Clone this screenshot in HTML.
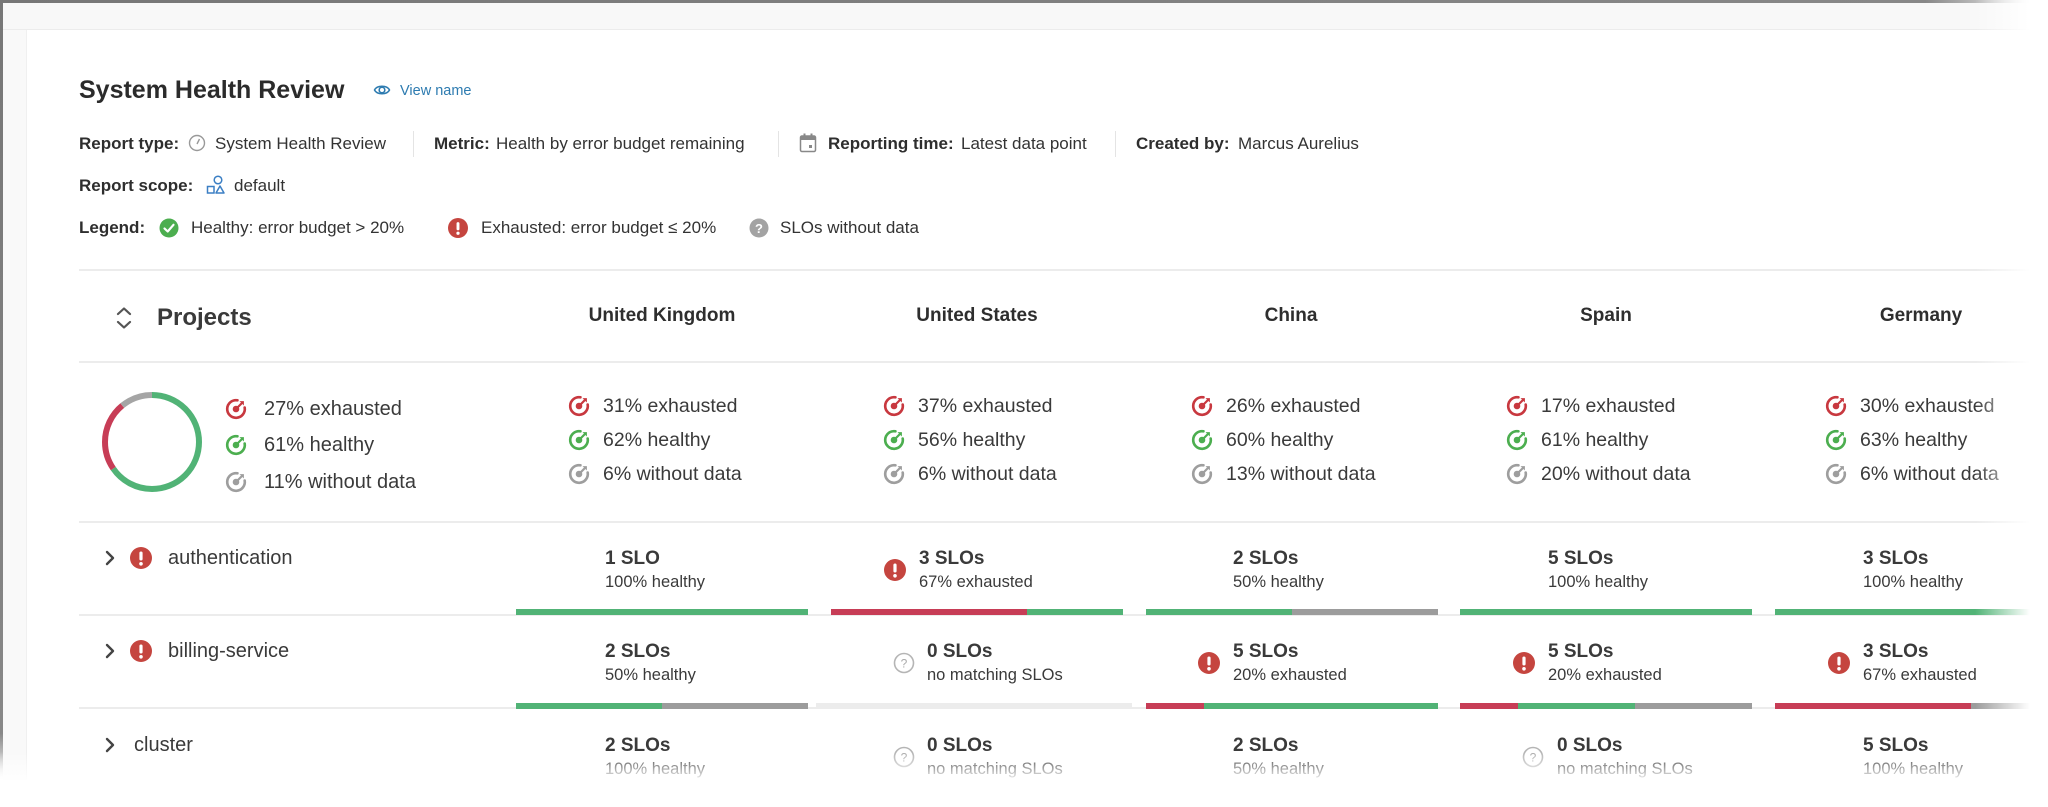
<!DOCTYPE html>
<html><head><meta charset="utf-8"><style>
*{margin:0;padding:0;box-sizing:border-box}
body{width:2048px;height:807px;overflow:hidden;background:#fff;font-family:"Liberation Sans",sans-serif;color:#333;position:relative}
.a{position:absolute;white-space:nowrap}
.b{font-weight:bold;color:#2e2e2e}
.t{font-size:17px;line-height:20px}
.sm{font-size:20px;line-height:24px;color:#3a3a3a}
.cs{font-size:19.5px;line-height:24px;color:#3a3a3a}
.h{font-size:19px;line-height:24px;font-weight:bold;color:#2e2e2e}
.st{font-size:19px;line-height:22px;font-weight:bold;color:#3a3a3a}
.sb{font-size:16.5px;line-height:20px;color:#3a3a3a}
.line{position:absolute;left:79px;width:1960px;height:2px;background:#ececec}
.bar{position:absolute;height:6px;display:flex;width:292px}
.g{background:#51b376}.r{background:#c73d56}.y{background:#9c9c9c}.l{background:#ececec}
.vd{position:absolute;width:1px;height:26px;background:#e4e4e4;top:131px}
</style></head><body>
<svg width="0" height="0" style="position:absolute">
<defs>
<symbol id="tg" viewBox="0 0 20 20"><path d="M11.3 2.1A8 8 0 1 0 17.9 8.7" fill="none" stroke="currentColor" stroke-width="2.4" stroke-linecap="round"/><circle cx="10" cy="10" r="3" fill="currentColor"/><path d="M10 10L16 4" stroke="currentColor" stroke-width="2"/><path d="M13.2 2.8L17.2 2.8L17.2 6.8Z" fill="currentColor"/></symbol>
<symbol id="ex" viewBox="0 0 22 22"><circle cx="11" cy="11" r="11" fill="#c5453f"/><rect x="9.4" y="4.5" width="3.2" height="9" rx="1.6" fill="#fff"/><circle cx="11" cy="16.8" r="1.8" fill="#fff"/></symbol>
<symbol id="q" viewBox="0 0 22 22"><circle cx="11" cy="11" r="9.5" fill="none" stroke="#b5b5b5" stroke-width="1.6"/><text x="11" y="15.5" font-size="12" text-anchor="middle" fill="#aaa" font-family="Liberation Sans">?</text></symbol>
<symbol id="chev" viewBox="0 0 12 16"><path d="M3 2L9 8L3 14" fill="none" stroke="#444" stroke-width="2.4" stroke-linecap="round" stroke-linejoin="round"/></symbol>
</defs></svg>

<div class="a" style="left:0;top:0;width:2048px;height:3px;background:linear-gradient(90deg,#777 0,#888 94%,rgba(255,255,255,0) 100%)"></div>
<div class="a" style="left:0;top:0;width:3px;height:780px;background:linear-gradient(#777 0,#888 94%,rgba(255,255,255,0))"></div>
<div class="a" style="left:3px;top:3px;width:2045px;height:27px;background:#f8f8f8;border-bottom:1px solid #ececec"></div>
<div class="a" style="left:3px;top:30px;width:24px;height:750px;background:#f9f9f9;border-right:1px solid #f0f0f0"></div>

<div class="a b" style="left:79px;top:75px;font-size:25px;line-height:30px;color:#2b2b2b">System Health Review</div>
<svg class="a" style="left:373px;top:81px" width="18" height="18" viewBox="0 0 18 18"><path d="M1.5 9C4 4 14 4 16.5 9C14 14 4 14 1.5 9Z" fill="none" stroke="#2d7bb0" stroke-width="1.5"/><circle cx="9" cy="9" r="2.8" fill="none" stroke="#2d7bb0" stroke-width="1.6"/></svg>
<div class="a" style="left:400px;top:82px;font-size:14.5px;line-height:18px;color:#2d7bb0">View name</div>

<div class="a t b" style="left:79px;top:134px">Report type:</div>
<svg class="a" style="left:188px;top:134px" width="18" height="18" viewBox="0 0 18 18"><circle cx="9" cy="9" r="7.5" fill="none" stroke="#999" stroke-width="1.4"/><path d="M9 10L11.5 5" stroke="#999" stroke-width="1.4"/></svg>
<div class="a t" style="left:215px;top:134px">System Health Review</div>
<div class="vd" style="left:413px"></div>
<div class="a t b" style="left:434px;top:134px">Metric:</div>
<div class="a t" style="left:496px;top:134px">Health by error budget remaining</div>
<div class="vd" style="left:778px"></div>
<svg class="a" style="left:799px;top:133px" width="18" height="20" viewBox="0 0 18 20"><rect x="1.5" y="3" width="15" height="15.5" rx="1.5" fill="none" stroke="#888" stroke-width="1.5"/><rect x="1.5" y="3" width="15" height="4" fill="#888"/><rect x="4.5" y="0.5" width="2" height="4" fill="#888"/><rect x="11.5" y="0.5" width="2" height="4" fill="#888"/><rect x="10" y="12" width="3" height="3" fill="#888"/></svg>
<div class="a t b" style="left:828px;top:134px">Reporting time:</div>
<div class="a t" style="left:961px;top:134px">Latest data point</div>
<div class="vd" style="left:1115px"></div>
<div class="a t b" style="left:1136px;top:134px">Created by:</div>
<div class="a t" style="left:1238px;top:134px">Marcus Aurelius</div>

<div class="a t b" style="left:79px;top:176px">Report scope:</div>
<svg class="a" style="left:206px;top:175px" width="20" height="20" viewBox="0 0 20 20"><circle cx="12" cy="5" r="3.8" fill="none" stroke="#3b7fc4" stroke-width="1.5"/><rect x="1.5" y="11.5" width="6.5" height="6.5" fill="none" stroke="#3b7fc4" stroke-width="1.5"/><path d="M10 18L14 11L18 18Z" fill="none" stroke="#3b7fc4" stroke-width="1.5" stroke-linejoin="round"/></svg>
<div class="a t" style="left:234px;top:176px">default</div>

<div class="a t b" style="left:79px;top:218px">Legend:</div>
<svg class="a" style="left:159px;top:217px" width="20" height="22" viewBox="0 0 20 22"><circle cx="10" cy="11" r="9.5" fill="#4cae4f"/><path d="M5.5 11.5L8.7 14.5L14.5 7.8" fill="none" stroke="#fff" stroke-width="2.2" stroke-linecap="round" stroke-linejoin="round"/></svg>
<div class="a t" style="left:191px;top:218px">Healthy: error budget &gt; 20%</div>
<svg class="a" style="left:448px;top:217px" width="20" height="22"><use href="#ex"/></svg>
<div class="a t" style="left:481px;top:218px">Exhausted: error budget ≤ 20%</div>
<svg class="a" style="left:749px;top:217px" width="20" height="22" viewBox="0 0 20 22"><circle cx="10" cy="11" r="9.5" fill="#a3a3a3"/><text x="10" y="16" font-size="13" font-weight="bold" text-anchor="middle" fill="#fff" font-family="Liberation Sans">?</text></svg>
<div class="a t" style="left:780px;top:218px">SLOs without data</div>

<div class="line" style="top:269px"></div>

<svg class="a" style="left:114px;top:305px" width="20" height="26" viewBox="0 0 20 26"><path d="M4 9L10 3.5L16 9M4 17L10 22.5L16 17" fill="none" stroke="#555" stroke-width="2.2" stroke-linecap="round" stroke-linejoin="round"/></svg>
<div class="a b" style="left:157px;top:304px;font-size:24px;line-height:28px;color:#3a3a3a">Projects</div>
<div class="a h" style="left:516px;width:292px;text-align:center;top:304px">United Kingdom</div>
<div class="a h" style="left:831px;width:292px;text-align:center;top:304px">United States</div>
<div class="a h" style="left:1145px;width:292px;text-align:center;top:304px">China</div>
<div class="a h" style="left:1460px;width:292px;text-align:center;top:304px">Spain</div>
<div class="a h" style="left:1775px;width:292px;text-align:center;top:304px">Germany</div>

<div class="line" style="top:361px"></div>

<svg class="a" style="left:100px;top:390px" width="104" height="104" viewBox="0 0 104 104">
<g transform="rotate(-90 52 52)" fill="none" stroke-width="6">
<circle cx="52" cy="52" r="47" stroke="#51b376" stroke-dasharray="192.9 400"/>
<circle cx="52" cy="52" r="47" stroke="#c73d56" stroke-dasharray="0 192.9 69.8 400"/>
<circle cx="52" cy="52" r="47" stroke="#a5a5a5" stroke-dasharray="0 262.7 32.6 400"/>
</g></svg>
<svg class="a" style="left:225px;top:398px;color:#c8383f" width="22" height="22"><use href="#tg"/></svg>
<div class="a sm" style="left:264px;top:397px">27% exhausted</div>
<svg class="a" style="left:225px;top:434px;color:#4cae4f" width="22" height="22"><use href="#tg"/></svg>
<div class="a sm" style="left:264px;top:433px">61% healthy</div>
<svg class="a" style="left:225px;top:471px;color:#9e9e9e" width="22" height="22"><use href="#tg"/></svg>
<div class="a sm" style="left:264px;top:470px">11% without data</div>

<svg class="a" style="left:568px;top:395px;color:#c8383f" width="22" height="22"><use href="#tg"/></svg><div class="a cs" style="left:603px;top:394px">31% exhausted</div>
<svg class="a" style="left:568px;top:429px;color:#4cae4f" width="22" height="22"><use href="#tg"/></svg><div class="a cs" style="left:603px;top:428px">62% healthy</div>
<svg class="a" style="left:568px;top:463px;color:#9e9e9e" width="22" height="22"><use href="#tg"/></svg><div class="a cs" style="left:603px;top:462px">6% without data</div>

<svg class="a" style="left:883px;top:395px;color:#c8383f" width="22" height="22"><use href="#tg"/></svg><div class="a cs" style="left:918px;top:394px">37% exhausted</div>
<svg class="a" style="left:883px;top:429px;color:#4cae4f" width="22" height="22"><use href="#tg"/></svg><div class="a cs" style="left:918px;top:428px">56% healthy</div>
<svg class="a" style="left:883px;top:463px;color:#9e9e9e" width="22" height="22"><use href="#tg"/></svg><div class="a cs" style="left:918px;top:462px">6% without data</div>

<svg class="a" style="left:1191px;top:395px;color:#c8383f" width="22" height="22"><use href="#tg"/></svg><div class="a cs" style="left:1226px;top:394px">26% exhausted</div>
<svg class="a" style="left:1191px;top:429px;color:#4cae4f" width="22" height="22"><use href="#tg"/></svg><div class="a cs" style="left:1226px;top:428px">60% healthy</div>
<svg class="a" style="left:1191px;top:463px;color:#9e9e9e" width="22" height="22"><use href="#tg"/></svg><div class="a cs" style="left:1226px;top:462px">13% without data</div>

<svg class="a" style="left:1506px;top:395px;color:#c8383f" width="22" height="22"><use href="#tg"/></svg><div class="a cs" style="left:1541px;top:394px">17% exhausted</div>
<svg class="a" style="left:1506px;top:429px;color:#4cae4f" width="22" height="22"><use href="#tg"/></svg><div class="a cs" style="left:1541px;top:428px">61% healthy</div>
<svg class="a" style="left:1506px;top:463px;color:#9e9e9e" width="22" height="22"><use href="#tg"/></svg><div class="a cs" style="left:1541px;top:462px">20% without data</div>

<svg class="a" style="left:1825px;top:395px;color:#c8383f" width="22" height="22"><use href="#tg"/></svg><div class="a cs" style="left:1860px;top:394px">30% exhausted</div>
<svg class="a" style="left:1825px;top:429px;color:#4cae4f" width="22" height="22"><use href="#tg"/></svg><div class="a cs" style="left:1860px;top:428px">63% healthy</div>
<svg class="a" style="left:1825px;top:463px;color:#9e9e9e" width="22" height="22"><use href="#tg"/></svg><div class="a cs" style="left:1860px;top:462px">6% without data</div>

<div class="line" style="top:521px"></div>

<svg class="a" style="left:104px;top:550px" width="12" height="16"><use href="#chev"/></svg>
<svg class="a" style="left:130px;top:547px" width="22" height="22"><use href="#ex"/></svg>
<div class="a sm" style="left:168px;top:546px">authentication</div>
<div class="a st" style="left:605px;top:548px">1 SLO</div><div class="a sb" style="left:605px;top:572px">100% healthy</div>
<svg class="a" style="left:884px;top:559px" width="22" height="22"><use href="#ex"/></svg>
<div class="a st" style="left:919px;top:548px">3 SLOs</div><div class="a sb" style="left:919px;top:572px">67% exhausted</div>
<div class="a st" style="left:1233px;top:548px">2 SLOs</div><div class="a sb" style="left:1233px;top:572px">50% healthy</div>
<div class="a st" style="left:1548px;top:548px">5 SLOs</div><div class="a sb" style="left:1548px;top:572px">100% healthy</div>
<div class="a st" style="left:1863px;top:548px">3 SLOs</div><div class="a sb" style="left:1863px;top:572px">100% healthy</div>
<div class="line" style="top:614px"></div>
<div class="bar" style="left:516px;top:609px"><div class="g" style="flex:1"></div></div>
<div class="bar" style="left:831px;top:609px"><div class="r" style="flex:67"></div><div class="g" style="flex:33"></div></div>
<div class="bar" style="left:1146px;top:609px"><div class="g" style="flex:50"></div><div class="y" style="flex:50"></div></div>
<div class="bar" style="left:1460px;top:609px"><div class="g" style="flex:1"></div></div>
<div class="bar" style="left:1775px;top:609px"><div class="g" style="flex:1"></div></div>

<svg class="a" style="left:104px;top:643px" width="12" height="16"><use href="#chev"/></svg>
<svg class="a" style="left:130px;top:640px" width="22" height="22"><use href="#ex"/></svg>
<div class="a sm" style="left:168px;top:639px">billing-service</div>
<div class="a st" style="left:605px;top:641px">2 SLOs</div><div class="a sb" style="left:605px;top:665px">50% healthy</div>
<svg class="a" style="left:893px;top:652px" width="22" height="22"><use href="#q"/></svg>
<div class="a st" style="left:927px;top:641px">0 SLOs</div><div class="a sb" style="left:927px;top:665px">no matching SLOs</div>
<svg class="a" style="left:1198px;top:652px" width="22" height="22"><use href="#ex"/></svg>
<div class="a st" style="left:1233px;top:641px">5 SLOs</div><div class="a sb" style="left:1233px;top:665px">20% exhausted</div>
<svg class="a" style="left:1513px;top:652px" width="22" height="22"><use href="#ex"/></svg>
<div class="a st" style="left:1548px;top:641px">5 SLOs</div><div class="a sb" style="left:1548px;top:665px">20% exhausted</div>
<svg class="a" style="left:1828px;top:652px" width="22" height="22"><use href="#ex"/></svg>
<div class="a st" style="left:1863px;top:641px">3 SLOs</div><div class="a sb" style="left:1863px;top:665px">67% exhausted</div>
<div class="line" style="top:707px"></div>
<div class="bar" style="left:516px;top:703px"><div class="g" style="flex:50"></div><div class="y" style="flex:50"></div></div>
<div class="bar" style="left:816px;top:703px;width:316px"><div class="l" style="flex:1"></div></div>
<div class="bar" style="left:1146px;top:703px"><div class="r" style="flex:20"></div><div class="g" style="flex:80"></div></div>
<div class="bar" style="left:1460px;top:703px"><div class="r" style="flex:20"></div><div class="g" style="flex:40"></div><div class="y" style="flex:40"></div></div>
<div class="bar" style="left:1775px;top:703px"><div class="r" style="flex:67"></div><div class="y" style="flex:33"></div></div>

<svg class="a" style="left:104px;top:737px" width="12" height="16"><use href="#chev"/></svg>
<div class="a sm" style="left:134px;top:733px">cluster</div>
<div class="a st" style="left:605px;top:735px">2 SLOs</div><div class="a sb" style="left:605px;top:759px">100% healthy</div>
<svg class="a" style="left:893px;top:746px" width="22" height="22"><use href="#q"/></svg>
<div class="a st" style="left:927px;top:735px">0 SLOs</div><div class="a sb" style="left:927px;top:759px">no matching SLOs</div>
<div class="a st" style="left:1233px;top:735px">2 SLOs</div><div class="a sb" style="left:1233px;top:759px">50% healthy</div>
<svg class="a" style="left:1522px;top:746px" width="22" height="22"><use href="#q"/></svg>
<div class="a st" style="left:1557px;top:735px">0 SLOs</div><div class="a sb" style="left:1557px;top:759px">no matching SLOs</div>
<div class="a st" style="left:1863px;top:735px">5 SLOs</div><div class="a sb" style="left:1863px;top:759px">100% healthy</div>

<div class="a" style="left:0;top:752px;width:2048px;height:55px;background:linear-gradient(rgba(255,255,255,0),#fff 55%)"></div>
<div class="a" style="left:1975px;top:0;width:73px;height:807px;background:linear-gradient(90deg,rgba(255,255,255,0),#fff 75%)"></div>
</body></html>
